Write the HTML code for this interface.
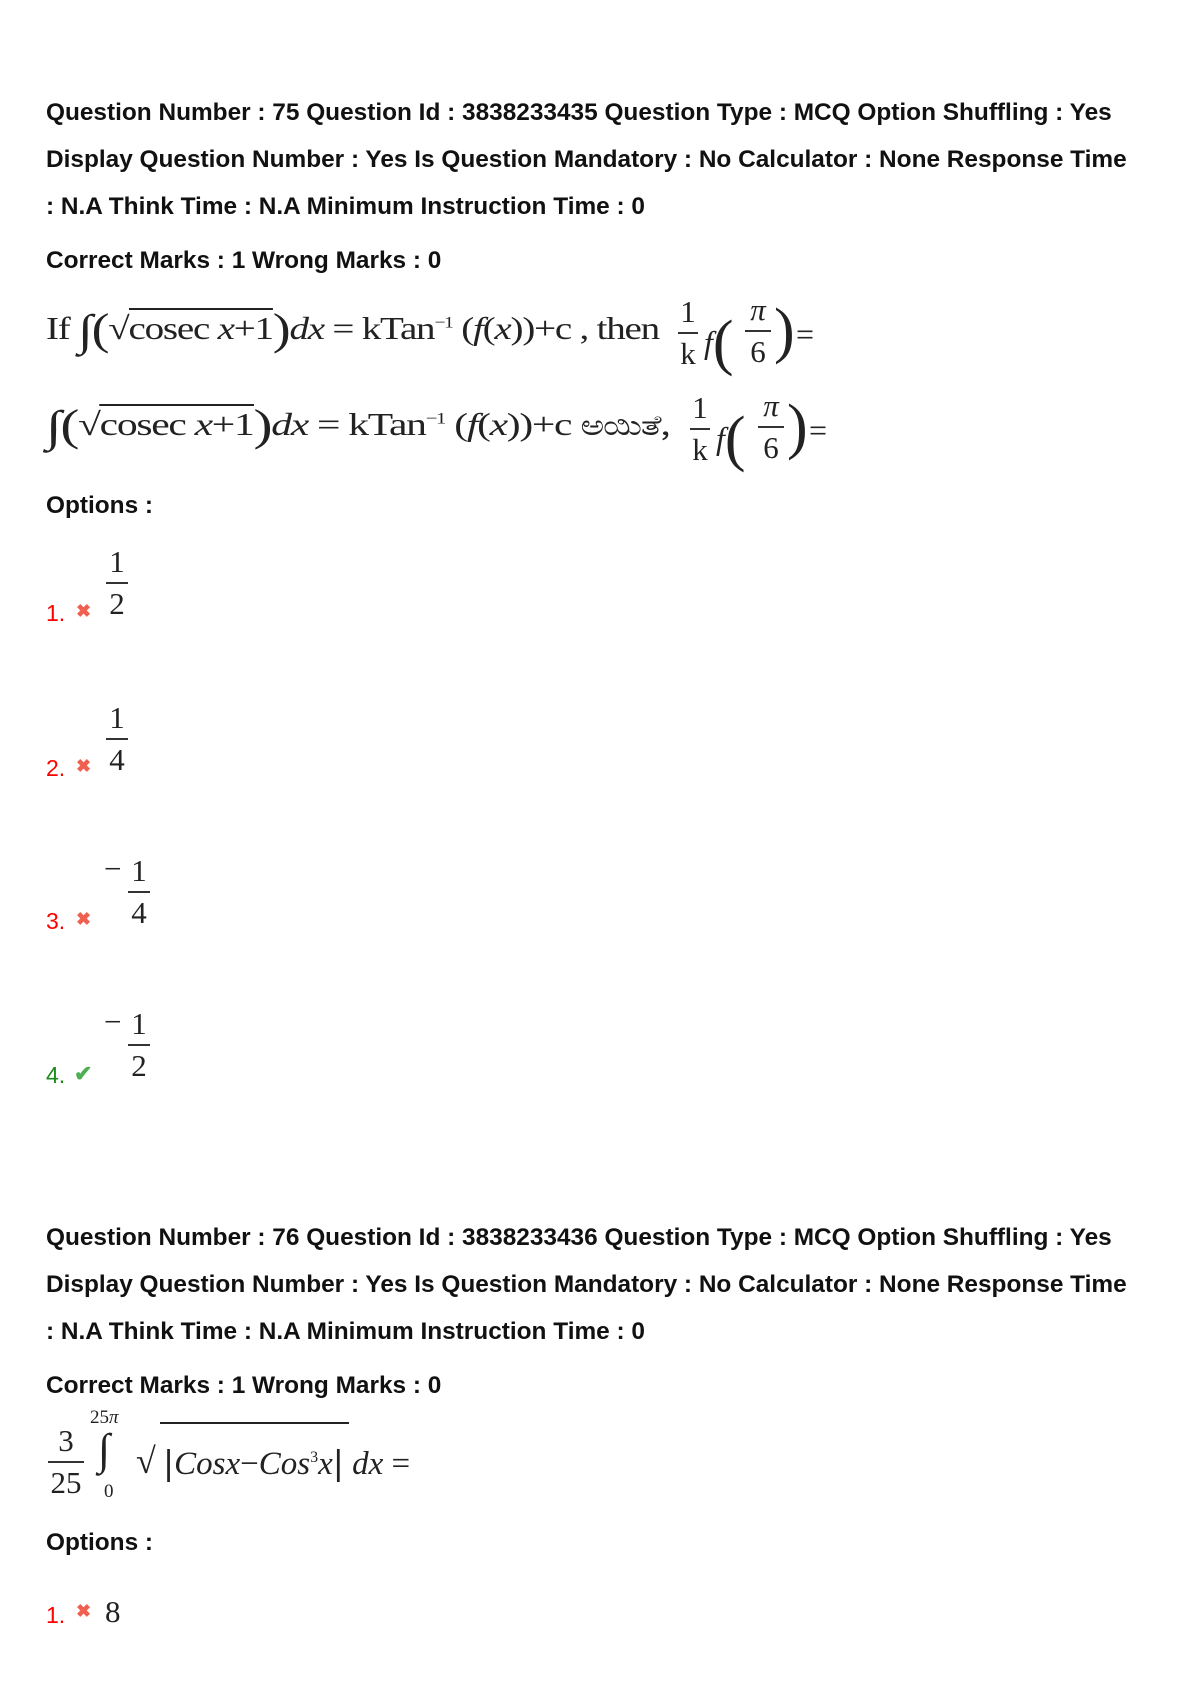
<!DOCTYPE html>
<html><head><meta charset="utf-8"><style>
body{margin:0;width:1190px;height:1684px;background:#fff;position:relative;font-family:"Liberation Sans",sans-serif;}
.t{position:absolute;left:46px;font-weight:bold;font-size:24.4px;color:#111;white-space:nowrap;line-height:1;}
.m{position:absolute;font-family:"Liberation Serif",serif;color:#222;white-space:nowrap;line-height:1;}
.n{position:absolute;left:46px;font-size:23px;line-height:1;}
.r{color:#f00}.g{color:#1a8a1a}
.x{position:absolute;color:#f06050;font-size:18px;font-weight:bold;}
.frac{position:absolute;font-family:"Liberation Serif",serif;font-size:31px;color:#222;text-align:center;line-height:1;}
.frac .l{border-top:2px solid #333;margin:5px 0 4px;}
</style></head><body>
<div class="t" style="top:101px">Question Number : 75 Question Id : 3838233435 Question Type : MCQ Option Shuffling : Yes</div>
<div class="t" style="top:148px">Display Question Number : Yes Is Question Mandatory : No Calculator : None Response Time</div>
<div class="t" style="top:195px">: N.A Think Time : N.A Minimum Instruction Time : 0</div>
<div class="t" style="top:249px">Correct Marks : 1 Wrong Marks : 0</div>

<div class="m" style="left:46px;top:308px;font-size:32px;letter-spacing:-1px;transform:scaleX(1.22);transform-origin:0 0">If <span style="font-size:44px;vertical-align:-6px">∫</span><span style="font-size:44px;vertical-align:-5px">(</span>√<span style="border-top:2px solid #222">cosec <i>x</i>+1</span><span style="font-size:44px;vertical-align:-5px">)</span><i>dx</i> = kTan<sup style="font-size:16px">−1</sup> (<i>f</i>(<i>x</i>))+c , then</div>
<div class="frac" style="left:678px;top:296px;width:20px">1<div class="l"></div>k</div>
<div class="m" style="left:704px;top:312px;font-size:32px"><i>f</i><span style="font-size:62px;vertical-align:-10px">(</span></div>
<div class="frac" style="left:745px;top:294px;width:26px"><i>π</i><div class="l"></div>6</div>
<div class="m" style="left:774px;top:300px;font-size:62px">)</div>
<div class="m" style="left:796px;top:318px;font-size:32px">=</div>

<div class="m" style="left:46px;top:404px;font-size:32px;letter-spacing:-1px;transform:scaleX(1.3);transform-origin:0 0"><span style="font-size:44px;vertical-align:-6px">∫</span><span style="font-size:44px;vertical-align:-5px">(</span>√<span style="border-top:2px solid #222">cosec <i>x</i>+1</span><span style="font-size:44px;vertical-align:-5px">)</span><i>dx</i> = kTan<sup style="font-size:16px">−1</sup> (<i>f</i>(<i>x</i>))+c <span style="font-family:'Noto Sans CJK SC',sans-serif;font-size:28px">ಅಯಿತೆ,</span></div>
<div class="frac" style="left:690px;top:392px;width:20px">1<div class="l"></div>k</div>
<div class="m" style="left:716px;top:408px;font-size:32px"><i>f</i><span style="font-size:62px;vertical-align:-10px">(</span></div>
<div class="frac" style="left:758px;top:390px;width:26px"><i>π</i><div class="l"></div>6</div>
<div class="m" style="left:787px;top:396px;font-size:62px">)</div>
<div class="m" style="left:809px;top:414px;font-size:32px">=</div>

<div class="t" style="top:494px">Options :</div>

<div class="n r" style="top:602px">1.</div><div class="x" style="left:76px;top:601px">✖</div>
<div class="frac" style="left:106px;top:546px;width:22px">1<div class="l"></div>2</div>
<div class="n r" style="top:757px">2.</div><div class="x" style="left:76px;top:756px">✖</div>
<div class="frac" style="left:106px;top:702px;width:22px">1<div class="l"></div>4</div>
<div class="n r" style="top:910px">3.</div><div class="x" style="left:76px;top:909px">✖</div>
<div class="m" style="left:104px;top:853px;font-size:31px">−</div>
<div class="frac" style="left:128px;top:855px;width:22px">1<div class="l"></div>4</div>
<div class="n g" style="top:1064px">4.</div><div class="x" style="left:74px;top:1061px;color:#4caf50;font-size:22px">✔</div>
<div class="m" style="left:104px;top:1006px;font-size:31px">−</div>
<div class="frac" style="left:128px;top:1008px;width:22px">1<div class="l"></div>2</div>

<div class="t" style="top:1226px">Question Number : 76 Question Id : 3838233436 Question Type : MCQ Option Shuffling : Yes</div>
<div class="t" style="top:1273px">Display Question Number : Yes Is Question Mandatory : No Calculator : None Response Time</div>
<div class="t" style="top:1320px">: N.A Think Time : N.A Minimum Instruction Time : 0</div>
<div class="t" style="top:1374px">Correct Marks : 1 Wrong Marks : 0</div>

<div class="frac" style="left:48px;top:1425px;width:36px">3<div class="l"></div>25</div>
<div class="m" style="left:90px;top:1408px;font-size:19px">25<i>π</i></div>
<div class="m" style="left:98px;top:1428px;font-size:44px">∫</div>
<div class="m" style="left:104px;top:1482px;font-size:19px">0</div>
<div class="m" style="left:136px;top:1443px;font-size:36px">√</div>
<div class="m" style="left:160px;top:1422px;width:189px;border-top:2px solid #222;height:0"></div>
<div class="m" style="left:163px;top:1446px;font-size:33px"><span style="font-family:'DejaVu Sans'">|</span><i>Cosx</i>−<i>Cos</i><sup style="font-size:16px">3</sup><i>x</i><span style="font-family:'DejaVu Sans'">|</span> <i>dx</i> =</div>

<div class="t" style="top:1531px">Options :</div>
<div class="n r" style="top:1604px">1.</div><div class="x" style="left:76px;top:1601px">✖</div>
<div class="m" style="left:105px;top:1596px;font-size:31px">8</div>
</body></html>
